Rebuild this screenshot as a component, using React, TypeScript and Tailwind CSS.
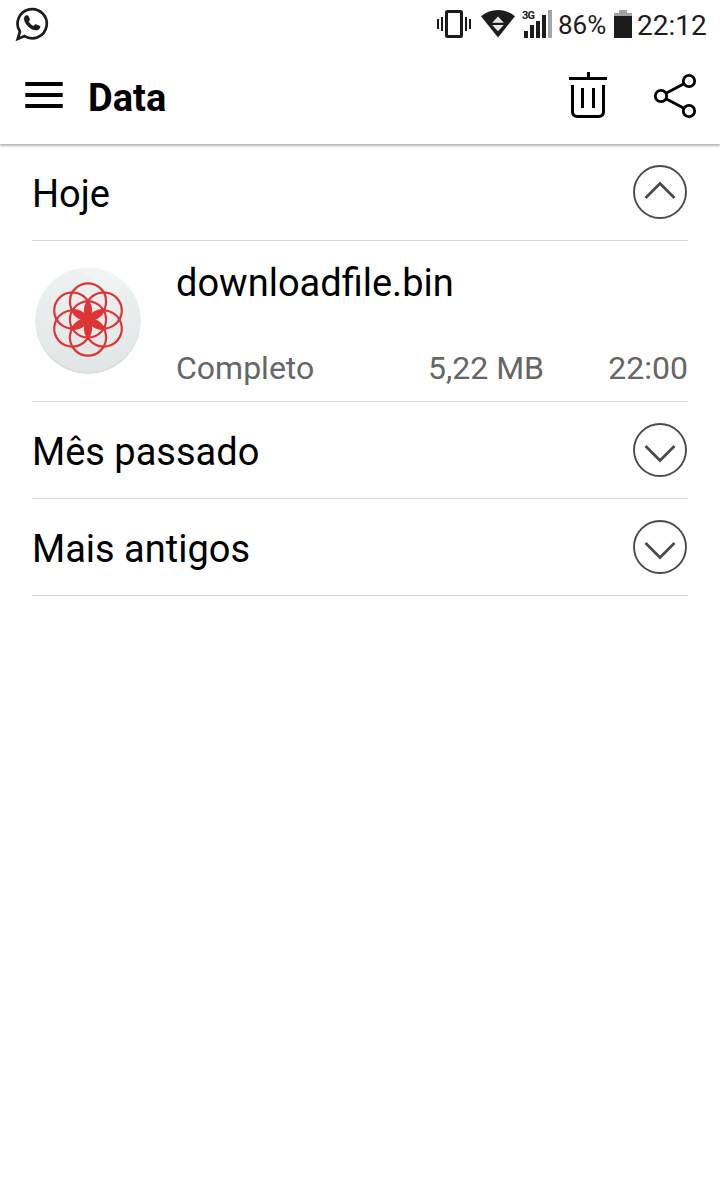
import type { ReactNode } from 'react';

const groups = [
  { title: 'Mês passado' },
  { title: 'Mais antigos' },
];

function WhatsAppIcon() {
  return (
    <svg width="34" height="36" viewBox="15 6 34 36" className="text-[#1c1c1c]">
      <path
        d="M18.6 39 L20.8 31.6 A14.6 14.6 0 1 1 25.4 36.1 Z"
        fill="none"
        stroke="currentColor"
        strokeWidth="2.7"
        transform="translate(-.9 0)"
      />
      <path
        d="M26.2 15.6C24.6 16 23.9 17.6 24.2 19.4C24.9 24 30.5 29.6 35.4 30.1C37.6 30.3 39.7 29.2 40.1 27.2C40.2 26.6 40 26.2 39.6 26L36 24.5C35.4 24.3 35 24.5 34.6 25L33.6 26.2C31.5 25.5 29.5 23.6 28.6 21.3L29.5 20.2C29.8 19.8 29.8 19.4 29.6 18.9L28.3 16C28 15.5 27 15.4 26.2 15.6Z"
        fill="currentColor"
        stroke="currentColor"
        strokeWidth=".4"
      />
    </svg>
  );
}

function VibrateIcon() {
  return (
    <svg width="34" height="28" viewBox="437 10 34 28" fill="#1c1c1c">
      <rect x="437" y="19" width="2" height="10" />
      <rect x="441" y="17" width="2" height="14" />
      <rect x="446.5" y="11.5" width="15" height="25" rx="1" fill="none" stroke="#1c1c1c" strokeWidth="3" />
      <rect x="465" y="17" width="2" height="14" />
      <rect x="469" y="19" width="2" height="10" />
    </svg>
  );
}

function WifiIcon() {
  return (
    <svg width="34" height="28" viewBox="481 10 34 28">
      <path d="M481 16.3C491 8 505 8 515 16.3L498 37.5Z" fill="#1c1c1c" />
      <path d="M498 16.5L503.8 22.8H492.2ZM492.2 25H503.8L498 31.2Z" fill="#e8e8e8" />
    </svg>
  );
}

function SignalIcon() {
  return (
    <svg width="31" height="30" viewBox="521 8 31 30" fill="#1c1c1c">
      <text x="522" y="19" fontSize="11" fontWeight="700" fontFamily="Roboto, sans-serif" textLength="13">
        3G
      </text>
      <rect x="524" y="31" width="4" height="7" />
      <rect x="530" y="25" width="4" height="13" />
      <rect x="536" y="21" width="4" height="17" />
      <rect x="542" y="15" width="4" height="23" />
      <rect x="548" y="10" width="4" height="28" fill="#a4a4a4" />
    </svg>
  );
}

function BatteryIcon() {
  return (
    <svg width="18" height="28" viewBox="0 0 18 28">
      <path d="M5 0H13V3H18V6H0V3H5Z" fill="#a4a4a4" />
      <rect y="6" width="18" height="22" fill="#1c1c1c" />
    </svg>
  );
}

function StatusBar() {
  return (
    <div className="flex h-[48px] items-start justify-between pl-[15px] text-[#1c1c1c]">
      <div className="pt-[6px]">
        <WhatsAppIcon />
      </div>
      <div className="flex h-[38px] w-[283px] items-end">
        <VibrateIcon />
        <div className="ml-[10px]">
          <WifiIcon />
        </div>
        <div className="ml-[6px]">
          <SignalIcon />
        </div>
        <span className="ml-[6px] w-[51px] text-[26px] leading-[26px]">86%</span>
        <div className="ml-[5px]">
          <BatteryIcon />
        </div>
        <span className="ml-[5px] text-[28px] leading-[24px]">22:12</span>
      </div>
    </div>
  );
}

function TrashIcon() {
  return (
    <svg width="38" height="46" viewBox="569 72 38 46">
      <path d="M587 72H590V77H607V80H569V77H587Z" />
      <path d="M572.5 85V111.5Q572.5 116.5 577.5 116.5H598.5Q603.5 116.5 603.5 111.5V85" fill="none" stroke="#000" strokeWidth="3" />
      <path d="M581 88H584V108H581ZM592 88H595V108H592Z" />
    </svg>
  );
}

function ShareIcon() {
  return (
    <svg className="mt-px" width="44" height="46" viewBox="653 73 44 46" fill="none" stroke="#000" strokeWidth="2.8">
      <circle cx="661" cy="96" r="5.7" />
      <circle cx="689" cy="81" r="5.7" />
      <circle cx="689" cy="111" r="5.7" />
      <path d="M666 93.3L684 83.7M666 98.7L684 108.3" />
    </svg>
  );
}

function Header() {
  return (
    <header className="flex h-[96px] items-start shadow-[0_2px_2px_rgba(0,0,0,0.28)]">
      <svg className="mt-[34px] ml-[25px]" width="38" height="26" viewBox="0 0 38 26">
        <path d="M.3 0H37.7V4H.3ZM.3 11H37.7V15H.3ZM.3 22H37.7V26H.3Z" />
      </svg>
      <h1 className="mt-[28px] ml-[25px] text-[38px] leading-[44px] font-bold">Data</h1>
      <div className="mt-[24px] mr-[23px] ml-auto flex gap-[46px]">
        <TrashIcon />
        <ShareIcon />
      </div>
    </header>
  );
}

function Toggle({ open = false }: { open?: boolean }) {
  return (
    <svg width="56" height="56" viewBox="0 0 56 56" fill="none" stroke="#4a4a4a">
      <circle cx="28" cy="28" r="26" strokeWidth="1.9" />
      <path d={open ? 'M13.5 34L28 19.5L42.5 34' : 'M13.5 24L28 38.5L42.5 24'} strokeWidth="2.7" />
    </svg>
  );
}

function GroupRow({ title, open }: { title: string; open?: boolean }) {
  return (
    <div className="flex h-[97px] items-center justify-between border-b border-[#d8d8d8]">
      <h2 className="pt-1 text-[38px] leading-[44px]">{title}</h2>
      <Toggle open={open} />
    </div>
  );
}

function FileIcon() {
  const angles = [0, 60, 120, 180, 240, 300];
  return (
    <svg className="mb-[2px]" width="112" height="112" viewBox="-56 -56 112 112">
      <defs>
        <linearGradient id="disc" x1="0" y1="0" x2="0" y2="1">
          <stop offset="0" stopColor="#eef2f3" />
          <stop offset="1" stopColor="#e1e5e6" />
        </linearGradient>
        <clipPath id="disc-clip">
          <circle r="52.5" />
        </clipPath>
      </defs>
      <circle cy="1.2" r="52.5" fill="#d5d8d9" />
      <circle r="52.5" fill="url(#disc)" />
      <path d="M-20 -60L60 -60V-58L24 -24Z" fill="#fff" opacity=".25" clipPath="url(#disc-clip)" />
      <g transform="translate(0 -.5)" fill="none" stroke="#dd3535" strokeWidth="2.2">
        <circle r="18.1" />
        {angles.map((angle) => (
          <g key={angle} transform={`rotate(${angle})`}>
            <circle cy="-18.1" r="18.1" />
            <path d="M0 0A18.1 18.1 0 0 1 0 -18.1A18.1 18.1 0 0 1 0 0Z" fill="#dd3535" strokeWidth="2.9" />
          </g>
        ))}
      </g>
    </svg>
  );
}

function FileRow({ icon, name }: { icon: ReactNode; name: string }) {
  return (
    <div className="flex h-[161px] items-center border-b border-[#d8d8d8]">
      {icon}
      <div className="ml-[32px] flex h-full flex-1 flex-col justify-between pt-[20px] pb-[14px]">
        <p className="text-[38px] leading-[44px]">{name}</p>
        <div className="flex text-[32px] leading-[38px] text-[#666]">
          <span>Completo</span>
          <span className="ml-auto">5,22 MB</span>
          <span className="w-[144px] text-right">22:00</span>
        </div>
      </div>
    </div>
  );
}

export default function App() {
  return (
    <div className="min-h-screen bg-white font-[Roboto,sans-serif] text-black">
      <StatusBar />
      <Header />
      <main className="px-8">
        <GroupRow title="Hoje" open />
        <FileRow icon={<FileIcon />} name="downloadfile.bin" />
        {groups.map((group) => (
          <GroupRow key={group.title} title={group.title} />
        ))}
      </main>
    </div>
  );
}
